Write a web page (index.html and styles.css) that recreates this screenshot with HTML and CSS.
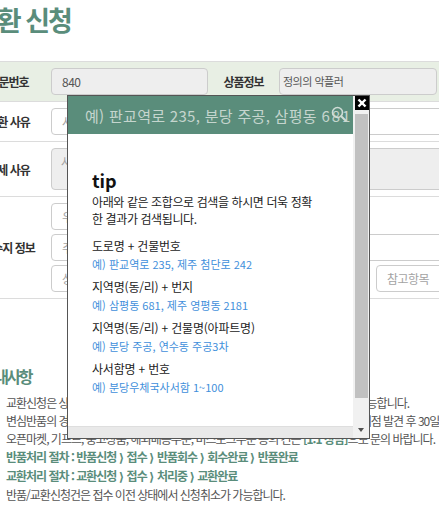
FILE: index.html
```html
<!DOCTYPE html>
<html lang="ko">
<head>
<meta charset="utf-8">
<title>교환 신청</title>
<link rel="stylesheet" href="styles.css">
</head>
<body>
<div class="page">
  <h1 class="title">교환 신청</h1>
  <div class="form">
    <div class="row row-head">
      <div class="label">주문번호</div>
      <div class="cell"><input class="field ro w-order" value="840" readonly></div>
      <div class="label">상품정보</div>
      <div class="cell cell-prod"><div class="field ro w-prod">정의의 악플러</div></div>
    </div>
    <div class="row">
      <div class="label">교환 사유</div>
      <div class="cell"><input class="field wide" placeholder="사유를 선택해주세요"></div>
    </div>
    <div class="row">
      <div class="label">상세 사유</div>
      <div class="cell"><textarea class="field ro wide area" placeholder="사유를 입력해주세요"></textarea></div>
    </div>
    <div class="row">
      <div class="label">회수지 정보</div>
      <div class="cell">
        <input class="field zip" placeholder="우편번호">
        <input class="field wide" placeholder="주소">
        <div class="line">
          <input class="field detail" placeholder="상세주소">
          <input class="field ref" placeholder="참고항목">
        </div>
      </div>
    </div>
  </div>
  <section class="notice">
    <h2>안내사항</h2>
    <ul>
      <li>교환신청은 상품 수령 후 7일 이내에 마이페이지 주문배송내역에서 직접 신청이 가능합니다.</li>
      <li>변심반품의 경우, 상품 수령 후 7일 이내, 상품의 하자, 또는 오배송의 경우 해당 문제점 발견 후 30일 이내에 신청 가능합니다.</li>
      <li>오픈마켓, 기프트, 중고상품, 해외배송주문, 비스포크주문 등의 건은 <b class="hl">[1:1 상담]</b>으로 문의 바랍니다.</li>
      <li class="green">반품처리 절차 : 반품신청 <span class="arr">⟩</span> 접수 <span class="arr">⟩</span> 반품회수 <span class="arr">⟩</span> 회수완료 <span class="arr">⟩</span> 반품완료</li>
      <li class="green">교환처리 절차 : 교환신청 <span class="arr">⟩</span> 접수 <span class="arr">⟩</span> 처리중 <span class="arr">⟩</span> 교환완료</li>
      <li>반품/교환신청건은 접수 이전 상태에서 신청취소가 가능합니다.</li>
    </ul>
  </section>
</div>

<div class="layer">
  <div class="layer-main">
    <div class="search">
      <span class="search-ph">예) 판교역로 235, 분당 주공, 삼평동 <span class="num">681</span></span>
      <svg class="search-ico" width="16" height="16" viewBox="0 0 16 16" aria-hidden="true">
        <circle cx="6.5" cy="6.5" r="5" fill="none" stroke="#cfdcd6" stroke-width="1.6"/>
        <line x1="10.2" y1="10.2" x2="14.5" y2="14.5" stroke="#cfdcd6" stroke-width="2" stroke-linecap="round"/>
      </svg>
    </div>
    <div class="tip">
      <h3>tip</h3>
      <p>아래와 같은 조합으로 검색을 하시면 더욱 정확<br>한 결과가 검색됩니다.</p>
      <dl>
        <dt>도로명 + 건물번호</dt>
        <dd>예) 판교역로 235, 제주 첨단로 242</dd>
        <dt>지역명(동/리) + 번지</dt>
        <dd>예) 삼평동 681, 제주 영평동 2181</dd>
        <dt>지역명(동/리) + 건물명(아파트명)</dt>
        <dd>예) 분당 주공, 연수동 주공3차</dd>
        <dt>사서함명 + 번호</dt>
        <dd>예) 분당우체국사서함 1~100</dd>
      </dl>
    </div>
    <div class="hbar"></div>
  </div>
  <div class="vbar">
    <div class="thumb"></div>
    <div class="arrow"></div>
  </div>
  <button class="close" type="button" aria-label="닫기">
    <svg width="14" height="14" viewBox="0 0 14 14" aria-hidden="true">
      <line x1="3.5" y1="3.5" x2="10.5" y2="10.5" stroke="#fff" stroke-width="2.4"/>
      <line x1="10.5" y1="3.5" x2="3.5" y2="10.5" stroke="#fff" stroke-width="2.4"/>
    </svg>
  </button>
</div>
</body>
</html>
```

FILE: styles.css
```css
body {
  margin: 0;
  overflow: hidden;
  background: #fff;
  font-family: "Noto Sans CJK KR", "Noto Sans", sans-serif;
  color: #333;
}

.page {
  margin-left: -27px;
  width: 580px;
}

.title {
  margin: 2px 0 0 1px;
  font-size: 27px;
  line-height: 36px;
  font-weight: 700;
  color: #5a8d7b;
  letter-spacing: -2px;
}

.form {
  margin-top: 23px;
  border-top: 1px solid #dcdcdc;
}

.row {
  display: flex;
  border-bottom: 1px solid #dcdcdc;
}

.row-head {
  background: #e8efe4;
}

.label {
  flex: none;
  width: 71px;
  display: flex;
  align-items: center;
  justify-content: center;
  font-size: 12px;
  font-weight: 700;
  letter-spacing: -1px;
  color: #333;
}

.cell {
  display: flex;
  flex-direction: column;
  gap: 4px;
  padding: 6px 0 6px 7px;
}

.cell-prod {
  padding-left: 0;
}

.field {
  box-sizing: border-box;
  display: block;
  height: 27px;
  margin: 0;
  padding: 0 10px;
  border: 1px solid #cccccc;
  border-radius: 4px;
  background: #fff;
  font: 12px/25px "Noto Sans CJK KR", sans-serif;
  letter-spacing: -0.5px;
  color: #555;
  outline: none;
}

.field::placeholder {
  color: #a3a3a3;
}

.ro {
  background: #eeeeee;
}

.w-order {
  width: 157px;
}

.w-prod {
  width: 158px;
  padding-left: 3px;
  font-size: 11px;
}

.wide {
  width: 470px;
}

.area {
  height: 42px;
  padding: 4px 9px;
  resize: none;
  line-height: 18px;
}

.zip {
  width: 160px;
}

.line {
  display: flex;
  gap: 6px;
}

.detail {
  width: 319px;
}

.ref {
  width: 140px;
}

.notice {
  margin-top: 66px;
}

.notice h2 {
  margin: 0 0 7px 9px;
  font-size: 16px;
  line-height: 22px;
  font-weight: 700;
  color: #5a8d7b;
  letter-spacing: -2.5px;
}

.notice ul {
  margin: 0;
  padding: 0 0 0 33px;
  list-style: none;
  font-size: 12px;
  line-height: 18px;
  letter-spacing: -1px;
  color: #555;
  white-space: nowrap;
}

.notice .green,
.notice .hl {
  color: #5a8d7b;
  font-weight: 700;
}

.notice .arr {
  font-family: "DejaVu Sans", sans-serif;
  font-weight: 700;
  letter-spacing: 0;
}

/* postcode layer */
.layer {
  position: absolute;
  left: 67px;
  top: 95px;
  width: 303px;
  height: 344px;
  box-sizing: border-box;
  border: 1px solid #555;
  background: #fff;
  display: flex;
}

.layer-main {
  width: 285px;
  display: flex;
  flex-direction: column;
}

.search {
  position: relative;
  flex: none;
  height: 38px;
  display: flex;
  align-items: center;
  padding-left: 17px;
  background: #5a8d7b;
  overflow: hidden;
}

.search-ph {
  font-size: 15px;
  color: #c5d5ce;
  letter-spacing: 0.3px;
  white-space: nowrap;
}

.search-ph .num {
  letter-spacing: 2px;
}

.search-ico {
  position: absolute;
  left: 263px;
  top: 10px;
}

.tip {
  flex: 1;
  padding: 35px 0 0 24px;
  overflow: hidden;
  color: #222;
}

.tip h3 {
  margin: 0;
  font-size: 18px;
  line-height: 22px;
  font-weight: 700;
  color: #111;
}

.tip p {
  margin: 2px 0 10px;
  font-size: 12px;
  line-height: 17px;
  letter-spacing: -0.4px;
}

.tip dl {
  margin: 0;
}

.tip dt {
  font-size: 12px;
  line-height: 18px;
  letter-spacing: -0.2px;
}

.tip dd {
  margin: 0 0 5px;
  font-size: 11px;
  line-height: 18px;
  color: #3f8fdb;
}

.hbar {
  flex: none;
  height: 12px;
  box-sizing: border-box;
  background: #e9e9e9;
  border-top: 1px solid #dedede;
}

.vbar {
  position: relative;
  width: 16px;
  background: #f1f1f1;
}

.thumb {
  position: absolute;
  left: 2px;
  top: 18px;
  width: 13px;
  height: 284px;
  background: #c1c1c1;
}

.arrow {
  position: absolute;
  left: 5px;
  bottom: 6px;
  width: 0;
  height: 0;
  border-left: 3px solid transparent;
  border-right: 3px solid transparent;
  border-top: 4px solid #505050;
}

.close {
  position: absolute;
  top: 0;
  right: 0;
  width: 14px;
  height: 14px;
  padding: 0;
  border: 0;
  background: #000;
  display: flex;
}
```
